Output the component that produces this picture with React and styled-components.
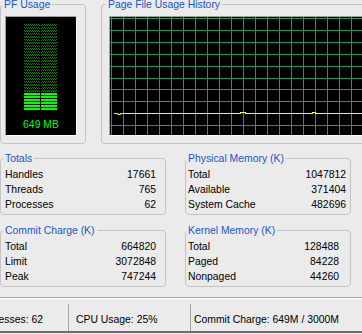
import React from 'react';
import styled, { createGlobalStyle } from 'styled-components';

const Global = createGlobalStyle`
  html, body { margin: 0; padding: 0; background: #ebebeb; overflow: hidden; }
  body {
    font-family: Tahoma, "Liberation Sans", Arial, sans-serif;
    font-size: 10.4px;
    color: #000;
  }
`;

const Window = styled.div`
  width: 362px;
  height: 334px;
  overflow: hidden;
  background: #ebebeb;
  display: flex;
  flex-direction: column;
`;

const Row = styled.div`
  display: flex;
  flex-shrink: 0;
  gap: ${(p) => p.$gap}px;
  margin-top: ${(p) => p.$mt}px;
`;

const Group = styled.fieldset`
  box-sizing: border-box;
  margin: 0;
  padding: 0;
  min-width: 0;
  flex-shrink: 0;
  width: ${(p) => p.$w}px;
  border: 1px solid #c4c4c4;
  border-radius: 4px;
`;

const Legend = styled.legend`
  margin-left: ${(p) => p.$ml}px;
  padding: 0 2px;
  line-height: 13px;
  font-size: 10.4px;
  color: #2155cc;
`;

const GroupBody = styled.div`
  padding: ${(p) => p.$pad};
`;

const Sunken = styled.div`
  box-sizing: border-box;
  width: ${(p) => p.$w}px;
  height: 120px;
  background: #000;
  border: 1px solid;
  border-color: #a0a0a0 #ffffff #ffffff #a0a0a0;
  display: flex;
  flex-direction: column;
  align-items: ${(p) => (p.$center ? 'center' : 'flex-start')};
  overflow: hidden;
`;

const MeterBars = styled.svg`
  display: block;
  margin-top: 7px;
  flex-shrink: 0;
`;

const MeterLabel = styled.div`
  margin-top: 8px;
  line-height: 12px;
  color: #00ff00;
  font-size: 10.4px;
  white-space: nowrap;
`;

const Graph = styled.svg`
  display: block;
  flex-shrink: 0;
`;

const Stat = styled.div`
  display: flex;
  justify-content: space-between;
  height: 15px;
  line-height: 15px;
  white-space: nowrap;
`;

const StatusBar = styled.div`
  display: flex;
  flex-shrink: 0;
  margin-top: 10px;
  padding-top: 6px;
  border-top: 1px solid #a3a3a3;
  box-shadow: inset 0 1px #ffffff;
  border-bottom: 2px solid #6e6e6e;
`;

const Pane = styled.div`
  box-sizing: border-box;
  height: 27px;
  line-height: 23px;
  padding-top: 4px;
  padding-left: ${(p) => p.$pl || 0}px;
  padding-right: ${(p) => p.$pr || 0}px;
  width: ${(p) => (p.$w ? `${p.$w}px` : 'auto')};
  flex: ${(p) => (p.$w ? '0 0 auto' : '1 1 auto')};
  display: flex;
  justify-content: ${(p) => (p.$end ? 'flex-end' : 'flex-start')};
  overflow: hidden;
  white-space: nowrap;
  border-left: ${(p) => (p.$first ? 'none' : '1px solid #a6a6a6')};
`;

const PaneText = styled.span`
  flex-shrink: 0;
`;

function PFMeter() {
  return (
    <MeterBars width="34" height="87" viewBox="0 0 34 87" shapeRendering="crispEdges">
      <defs>
        <pattern id="pfOff" width="2" height="3" patternUnits="userSpaceOnUse">
          <rect x="0" y="0" width="1" height="1" fill="#008a00" />
          <rect x="1" y="1" width="1" height="1" fill="#008a00" />
        </pattern>
        <pattern id="pfOn" width="2" height="3" patternUnits="userSpaceOnUse">
          <rect x="0" y="0" width="2" height="2" fill="#00ff00" />
        </pattern>
      </defs>
      <rect x="0" y="0" width="16" height="69" fill="url(#pfOff)" />
      <rect x="17" y="0" width="16" height="69" fill="url(#pfOff)" />
      <rect x="0" y="69" width="16" height="18" fill="url(#pfOn)" />
      <rect x="17" y="69" width="16" height="18" fill="url(#pfOn)" />
    </MeterBars>
  );
}

const TRACE_PATH =
  'M4 96.5H7.5L8.5 97.5H10L11 96.5H130.5V95.5H135.5V96.5H202.5V95.5H205.5V96.5H280';

function HistoryGraph() {
  const W = 280;
  const H = 118;
  const verticals = [];
  for (let x = 1; x < W; x += 12) verticals.push(x);
  const horizontals = [1, 13, 25, 37, 49, 61, 72, 84, 108];
  return (
    <Graph width={W} height={H} viewBox={`0 0 ${W} ${H}`}>
      <g shapeRendering="crispEdges">
        {verticals.map((x) => (
          <rect key={`v${x}`} x={x} y="0" width="1" height={H} fill="#1f9a5a" />
        ))}
        {horizontals.map((y) => (
          <rect key={`h${y}`} x="0" y={y} width={W} height="1" fill="#1f9a5a" />
        ))}
      </g>
      <path d={TRACE_PATH} fill="none" stroke="#ffff00" strokeWidth="1.2" />
    </Graph>
  );
}

function StatGroup({ title, w, ml, pad, rows }) {
  return (
    <Group $w={w}>
      <Legend $ml={ml}>{title}</Legend>
      <GroupBody $pad={pad}>
        {rows.map(([k, v]) => (
          <Stat key={k}>
            <span>{k}</span>
            <span>{v}</span>
          </Stat>
        ))}
      </GroupBody>
    </Group>
  );
}

export default function App() {
  return (
    <>
      <Global />
      <Window>
        <Row $gap={15} $mt={-2}>
          <Group $w={86}>
            <Legend $ml={1}>PF Usage</Legend>
            <GroupBody $pad="5px 8px 7px 4px">
              <Sunken $w={72} $center>
                <PFMeter />
                <MeterLabel>649 MB</MeterLabel>
              </Sunken>
            </GroupBody>
          </Group>
          <Group $w={320}>
            <Legend $ml={4}>Page File Usage History</Legend>
            <GroupBody $pad="5px 0 7px 7px">
              <Sunken $w={282}>
                <HistoryGraph />
              </Sunken>
            </GroupBody>
          </Group>
        </Row>

        <Row $gap={19} $mt={8}>
          <StatGroup
            title="Totals"
            w={166}
            ml={2}
            pad="2px 9px 2px 4px"
            rows={[
              ['Handles', '17661'],
              ['Threads', '765'],
              ['Processes', '62'],
            ]}
          />
          <StatGroup
            title="Physical Memory (K)"
            w={166}
            ml={0}
            pad="2px 4px 2px 2px"
            rows={[
              ['Total', '1047812'],
              ['Available', '371404'],
              ['System Cache', '482696'],
            ]}
          />
        </Row>

        <Row $gap={19} $mt={9}>
          <StatGroup
            title="Commit Charge (K)"
            w={166}
            ml={2}
            pad="2px 9px 2px 4px"
            rows={[
              ['Total', '664820'],
              ['Limit', '3072848'],
              ['Peak', '747244'],
            ]}
          />
          <StatGroup
            title="Kernel Memory (K)"
            w={166}
            ml={0}
            pad="2px 11px 2px 2px"
            rows={[
              ['Total', '128488'],
              ['Paged', '84228'],
              ['Nonpaged', '44260'],
            ]}
          />
        </Row>

        <StatusBar>
          <Pane $first $w={68} $end $pr={25}>
            <PaneText>Processes: 62</PaneText>
          </Pane>
          <Pane $w={122} $pl={7}>
            <PaneText>CPU Usage: 25%</PaneText>
          </Pane>
          <Pane $pl={3}>
            <PaneText>Commit Charge: 649M / 3000M</PaneText>
          </Pane>
        </StatusBar>
      </Window>
    </>
  );
}
